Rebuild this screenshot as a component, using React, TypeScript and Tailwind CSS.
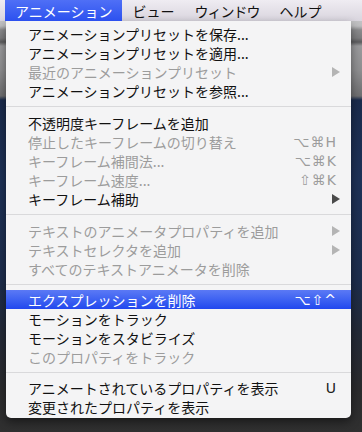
import { Fragment } from 'react'

type Item =
  | { kind: 'sep' }
  | { kind: 'item'; label: string; shortcut?: string; sub?: boolean; disabled?: boolean; active?: boolean }

const groups: Item[][] = [
  [
    { kind: 'item', label: 'アニメーションプリセットを保存...' },
    { kind: 'item', label: 'アニメーションプリセットを適用...' },
    { kind: 'item', label: '最近のアニメーションプリセット', sub: true, disabled: true },
    { kind: 'item', label: 'アニメーションプリセットを参照...' },
  ],
  [
    { kind: 'item', label: '不透明度キーフレームを追加' },
    { kind: 'item', label: '停止したキーフレームの切り替え', shortcut: '⌥⌘H', disabled: true },
    { kind: 'item', label: 'キーフレーム補間法...', shortcut: '⌥⌘K', disabled: true },
    { kind: 'item', label: 'キーフレーム速度...', shortcut: '⇧⌘K', disabled: true },
    { kind: 'item', label: 'キーフレーム補助', sub: true },
  ],
  [
    { kind: 'item', label: 'テキストのアニメータプロパティを追加', sub: true, disabled: true },
    { kind: 'item', label: 'テキストセレクタを追加', sub: true, disabled: true },
    { kind: 'item', label: 'すべてのテキストアニメータを削除', disabled: true },
  ],
  [
    { kind: 'item', label: 'エクスプレッションを削除', shortcut: '⌥⇧^', active: true },
    { kind: 'item', label: 'モーションをトラック' },
    { kind: 'item', label: 'モーションをスタビライズ' },
    { kind: 'item', label: 'このプロパティをトラック', disabled: true },
  ],
  [
    { kind: 'item', label: 'アニメートされているプロパティを表示', shortcut: 'U' },
    { kind: 'item', label: '変更されたプロパティを表示' },
  ],
]

const sepHeights = ['h-[13px]', 'h-[13px]', 'h-[12px]', 'h-[12px]']

function Arrow({ disabled }: { disabled?: boolean }) {
  return (
    <svg width="8" height="10" viewBox="0 0 8 10" className="mr-[-3px]">
      <path d="M0 0L8 5L0 10Z" fill={disabled ? '#b4b4b4' : '#4a4a4a'} />
    </svg>
  )
}

function Row({ item }: { item: Extract<Item, { kind: 'item' }> }) {
  const color = item.active ? 'text-white' : item.disabled ? 'text-[#9c9c9c]' : 'text-[#111]'
  return (
    <div
      className={`flex h-[19px] items-center justify-between pl-[22px] pr-[14px] text-[14px] leading-none ${color} ${
        item.active ? 'bg-gradient-to-b from-[#5b79f5] to-[#2247ee]' : ''
      }`}
    >
      <span className="whitespace-nowrap">{item.label}</span>
      {item.shortcut && (
        <span
          className={`whitespace-nowrap text-[14px] tracking-[1px] ${
            item.active ? 'text-white' : item.disabled ? 'text-[#9c9c9c]' : 'text-[#222]'
          }`}
          style={{ fontFamily: '"DejaVu Sans", "Noto Sans", sans-serif' }}
        >
          {item.shortcut}
        </span>
      )}
      {item.sub && <Arrow disabled={item.disabled} />}
    </div>
  )
}

export default function App() {
  return (
    <div
      className="relative h-[432px] w-[362px] overflow-hidden bg-[linear-gradient(to_bottom,#d4d4d6_0px,#bdbdbf_26px,#8a8a8c_30px,#7c7c7e_38px,#5c5c5e_42px,#9a9a9c_46px,#8e8e90_70px,#6e6e70_96px,#1a2b4c_100px,#1e3157_180px,#1d2d4c_280px,#232a38_330px,#2b2b2d_390px,#303030_432px)]"
      style={{ fontFamily: '"Noto Sans CJK JP", "Noto Sans", sans-serif' }}
    >
      {/* menu bar */}
      <div className="flex h-[21px] items-center bg-gradient-to-b from-[#efecf2] to-[#d9d5de] pl-[5px] text-[14px] leading-none text-[#111]">
        <div className="flex h-full items-center bg-gradient-to-b from-[#4f6ff6] to-[#2c50ef] px-[10px] text-white">
          アニメーション
        </div>
        <div className="px-[10px]">ビュー</div>
        <div className="px-[10px] tracking-[-1px]">ウィンドウ</div>
        <div className="px-[10px]">ヘルプ</div>
      </div>

      {/* dropdown */}
      <div className="ml-[6px] w-[345px] rounded-b-[5px] bg-[#f4f4f5] pb-[2px] pt-[3px] shadow-[0_4px_10px_rgba(0,0,0,0.45)]">
        {groups.map((g, gi) => (
          <Fragment key={gi}>
            {gi > 0 && (
              <div className={`flex items-center ${sepHeights[gi - 1]}`}>
                <div className="h-px w-full bg-[#d9d9db]" />
              </div>
            )}
            {g.map((it, i) => (it.kind === 'item' ? <Row key={i} item={it} /> : null))}
          </Fragment>
        ))}
      </div>
    </div>
  )
}
